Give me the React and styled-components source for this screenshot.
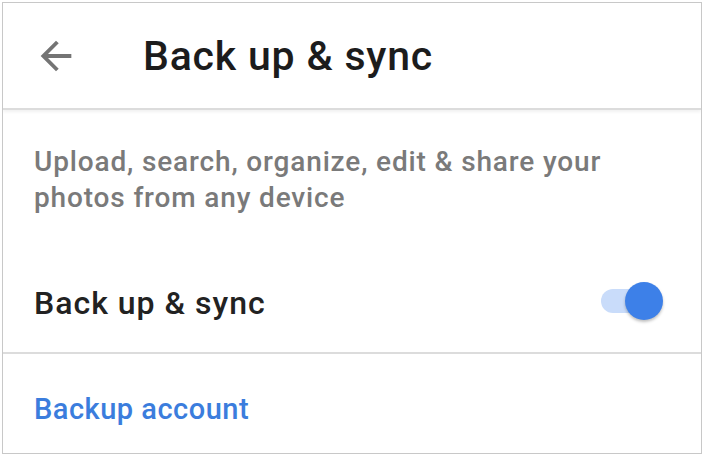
import React, { useState } from "react";
import styled, { createGlobalStyle } from "styled-components";

const GlobalStyle = createGlobalStyle`
  html, body {
    margin: 0;
    padding: 0;
    background: #ffffff;
  }
  body {
    font-family: Roboto, "Noto Sans", "Liberation Sans", sans-serif;
  }
`;

const Frame = styled.div`
  margin: 2px;
  width: 698px;
  height: 450px;
  border: 1px solid #c8c8c8;
  background: #fff;
  display: flex;
  flex-direction: column;
  overflow: hidden;
`;

const Toolbar = styled.header`
  height: 105px;
  display: flex;
  align-items: center;
  border-bottom: 2px solid #dcdcdc;
  box-shadow: 0 2px 3px rgba(0, 0, 0, 0.06);
  padding-left: 26px;
`;

const BackButton = styled.button`
  border: 0;
  background: none;
  padding: 0;
  width: 54px;
  height: 54px;
  display: flex;
  align-items: center;
  justify-content: center;
  color: #747474;
  cursor: pointer;
`;

const Title = styled.h1`
  margin: 0 0 0 60px;
  font-size: 41px;
  font-weight: 500;
  color: #1c1c1c;
  letter-spacing: 0.8px;
`;

const Description = styled.p`
  margin: 0;
  padding: 34px 40px 0 31px;
  font-size: 28px;
  font-weight: 500;
  line-height: 36px;
  letter-spacing: 0.85px;
  color: #7a7a7a;
`;

const SettingRow = styled.div`
  display: flex;
  align-items: center;
  justify-content: space-between;
  padding: 63px 36px 30px 31px;
  border-bottom: 2px solid #dcdcdc;
`;

const SettingLabel = styled.span`
  font-size: 32px;
  font-weight: 500;
  letter-spacing: 1px;
  color: #222;
  margin-top: 5px;
`;

const Switch = styled.button`
  position: relative;
  width: 64px;
  height: 38px;
  border: 0;
  padding: 0;
  background: none;
  cursor: pointer;
`;

const Track = styled.span`
  position: absolute;
  left: 0;
  right: 6px;
  top: 7px;
  height: 24px;
  border-radius: 12px;
  background: ${p => (p.$on ? "#c9dcfa" : "#d6d6d6")};
`;

const Thumb = styled.span`
  position: absolute;
  top: 0;
  left: ${p => (p.$on ? "24px" : "-6px")};
  width: 38px;
  height: 38px;
  border-radius: 50%;
  background: ${p => (p.$on ? "#3d80e8" : "#f5f5f5")};
  box-shadow: 0 2px 3px rgba(0, 0, 0, 0.25);
`;

const LinkRow = styled.div`
  padding: 38px 31px 0 31px;
`;

const AccountLink = styled.a`
  font-size: 29px;
  font-weight: 500;
  letter-spacing: 0.5px;
  color: #3b7ddd;
  text-decoration: none;
  cursor: pointer;
`;

const ArrowBack = () => (
  <svg width="46" height="46" viewBox="0 0 24 24" fill="currentColor">
    <path d="M20 11H7.83l5.59-5.59L12 4l-8 8 8 8 1.41-1.41L7.83 13H20v-2z" />
  </svg>
);

const App = () => {
  const [on, setOn] = useState(true);
  return (
    <React.Fragment>
      <GlobalStyle />
      <Frame>
        <Toolbar>
          <BackButton aria-label="Back">
            <ArrowBack />
          </BackButton>
          <Title>Back up &amp; sync</Title>
        </Toolbar>
        <Description>
          Upload, search, organize, edit &amp; share your photos from any device
        </Description>
        <SettingRow>
          <SettingLabel>Back up &amp; sync</SettingLabel>
          <Switch aria-label="Back up & sync" onClick={() => setOn(!on)}>
            <Track $on={on} />
            <Thumb $on={on} />
          </Switch>
        </SettingRow>
        <LinkRow>
          <AccountLink>Backup account</AccountLink>
        </LinkRow>
      </Frame>
    </React.Fragment>
  );
};

export default App;
